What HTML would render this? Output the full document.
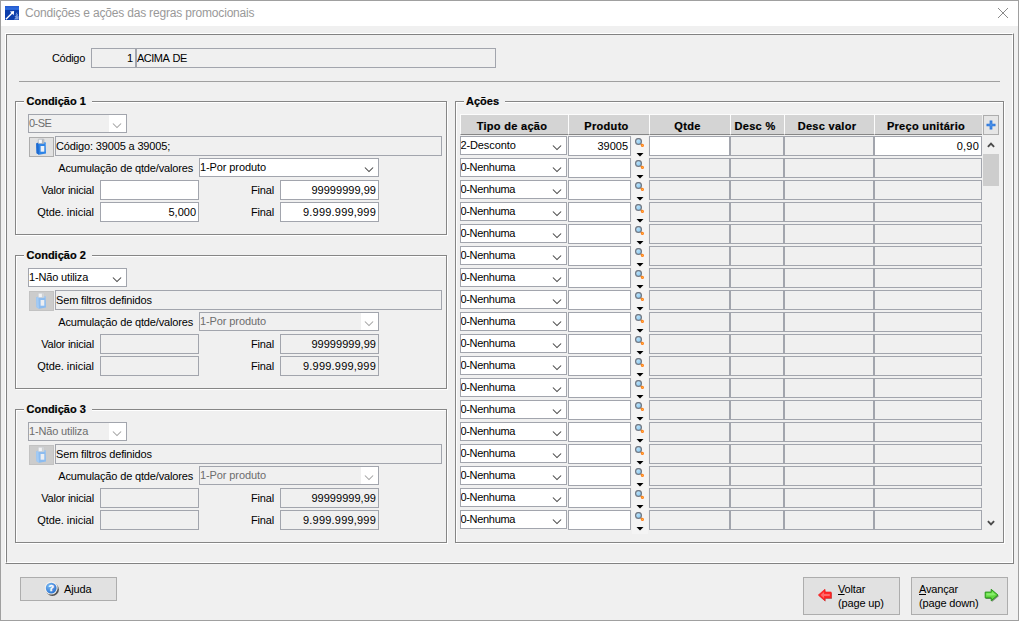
<!DOCTYPE html>
<html lang="pt-BR"><head><meta charset="utf-8"><title>Condições e ações das regras promocionais</title>
<style>
*{box-sizing:border-box;margin:0;padding:0}
html,body{width:1023px;height:623px;background:#fff;overflow:hidden}
body{font-family:"Liberation Sans",sans-serif;font-size:11px;color:#000;position:relative;line-height:13px}
.a{position:absolute}
.win{left:0;top:0;width:1019px;height:621px;background:#f0f0f0;border:1px solid #a0a0a0}
.tbar{left:1px;top:1px;width:1017px;height:25px;background:#fff}
.ttl{left:25px;top:5px;font-size:12px;line-height:16px;color:#999;letter-spacing:-0.18px;white-space:nowrap}
.panel{left:5px;top:33px;width:1009px;height:531px;border:1px solid;border-color:#fff #828282 #828282 #fff}
.panel i{position:absolute;left:0;top:0;right:0;bottom:0;border:1px solid;border-color:#828282 #fff #fff #828282}
.t{white-space:nowrap;height:13px;line-height:13px;letter-spacing:-0.16px}
.r{text-align:right}
.in{border:1px solid #a2a5ad;background:#fff;height:20px;line-height:18px;white-space:nowrap;overflow:hidden;padding:0 2px 0 0;letter-spacing:0}
.dis{background:#f0f0f0}
.cb{border:1px solid #a2a5ad;background:#fff;height:19px;line-height:17px;white-space:nowrap;overflow:hidden;padding:0;letter-spacing:-0.1px}
.cbd{background:#f0f0f0;color:#6d6d6d}
.fs{border:1px solid #868686;box-shadow:1px 1px 0 #fff, inset 1px 1px 0 #fff}
.lg{font-weight:bold;-webkit-text-stroke:0.2px #000;background:#f0f0f0;height:13px;line-height:13px;white-space:nowrap}
.btn{background:#e1e1e1;border:1px solid #adadad}
.hd{-webkit-text-stroke:0.2px #000;background:#d4d4d4;height:21px;line-height:22.6px;font-weight:bold;text-align:center;white-space:nowrap;border-bottom:1px solid #868686;border-top:1px solid #fcfcfc;border-left:1px solid #fcfcfc;letter-spacing:0.3px;padding-right:5px}
.cell{border:1px solid #a2a5ad;background:#f0f0f0;height:20px}
.w{background:#fff}
u{text-decoration:underline}
</style></head><body>
<svg width="0" height="0" style="position:absolute"><defs><linearGradient id="mg" x1="0" y1="0" x2="1" y2="1"><stop offset="0" stop-color="#d0ecfc"/><stop offset="1" stop-color="#7cc3f2"/></linearGradient></defs></svg>
<div class="a win"></div>
<div class="a tbar"></div>
<svg class="a" style="left:5px;top:6px" width="14" height="14" viewBox="0 0 14 14"><defs><linearGradient id="ig" x1="0" y1="0" x2="0" y2="1"><stop offset="0" stop-color="#2559cc"/><stop offset="1" stop-color="#3273e6"/></linearGradient></defs><rect width="14" height="14" fill="#0b3dab"/><rect width="14" height="3.8" fill="url(#ig)"/><path d="M0.9 13.3 L7.4 6.8" stroke="#fff" stroke-width="1.3"/><path d="M4.9 5.4 L9.1 5 L8.7 9.3 Z" fill="#fff"/><path d="M12.2 6 L10.4 8.6 L12 8.4 L9.4 11 L10.8 11 L9 13.5 H13.6 V10 L12.6 10.4 L13 8 L12 8.3 Z" fill="#8fabe6" opacity="0.85"/></svg>
<div class="a ttl">Condições e ações das regras promocionais</div>
<svg class="a" style="left:997px;top:7px" width="12" height="12" viewBox="0 0 12 12"><path d="M1 1 L11 11 M11 1 L1 11" stroke="#8a8a8a" stroke-width="1"/></svg>
<div class="a panel"><i></i></div>
<div class="a t r" style="left:30px;top:52px;width:55px;letter-spacing:-0.3px">Código</div>
<div class="a in dis r" style="left:91px;top:48px;width:45px;padding-right:2px">1</div>
<div class="a in dis" style="left:136px;top:48px;width:360px;letter-spacing:-0.5px;word-spacing:1.2px">ACIMA DE</div>
<div class="a" style="left:19px;top:81px;width:981px;height:1px;background:#a0a0a0"></div>
<div class="a fs" style="left:15px;top:101px;width:432px;height:134px"></div>
<div class="a lg" style="left:24px;top:95px;width:68px;padding-left:2.5px">Condição 1</div>
<div class="a cb cbd" style="left:28px;top:114px;width:99px;letter-spacing:-0.55px">0-SE</div>
<div class="a" style="left:109px;top:115px;width:17px;height:17px;background:#fff"></div>
<svg class="a" style="left:112px;top:122px" width="11" height="7" viewBox="0 0 11 7"><path d="M0.9 1.5 L5 5.6 L9.1 1.5" fill="none" stroke="#a3a3a3" stroke-width="1.05"/></svg>
<div class="a btn" style="left:29px;top:137px;width:25px;height:20px"></div>
<svg class="a" style="left:35px;top:138px" width="13" height="18" viewBox="0 0 13 18"><path d="M1.2 5.6 L3.4 4.6 H10.6 L11 15.4 L4 16.8 L1.6 15.2 Z" fill="#2e84e6"/><path d="M1.2 5.6 L3.4 4.6 L4 16.8 L1.6 15.2 Z" fill="#1f6ad0"/><path d="M3.4 4.6 H10.6 L10.7 6 H3.5 Z" fill="#4a9af2"/><rect x="3.3" y="1.2" width="5.6" height="4.4" rx="0.5" fill="#f6f7f9" stroke="#9ea4ad" stroke-width="0.6"/><rect x="6.9" y="1.5" width="1.7" height="3.8" fill="#9aa0a9" opacity="0.75"/><rect x="5.6" y="8" width="3.7" height="5.7" fill="#eef1f6"/></svg>
<div class="a in dis" style="left:55px;top:136px;width:387px;letter-spacing:-0.15px">Código: 39005 a 39005;</div>
<div class="a t r" style="left:40px;top:162px;width:153px">Acumulação de qtde/valores</div>
<div class="a cb" style="left:199px;top:158px;width:180px">1-Por produto</div>
<svg class="a" style="left:364px;top:166px" width="11" height="7" viewBox="0 0 11 7"><path d="M0.9 1.5 L5 5.6 L9.1 1.5" fill="none" stroke="#444" stroke-width="1.05"/></svg>
<div class="a t r" style="left:29px;top:184px;width:65px;letter-spacing:-0.2px">Valor inicial</div>
<div class="a in r" style="left:100px;top:180px;width:99px"></div>
<div class="a t r" style="left:240px;top:184px;width:34px">Final</div>
<div class="a in r" style="left:280px;top:180px;width:99px;letter-spacing:0.03px">99999999,99</div>
<div class="a t r" style="left:29px;top:206px;width:65px;letter-spacing:-0.05px">Qtde. inicial</div>
<div class="a in r" style="left:100px;top:202px;width:99px">5,000</div>
<div class="a t r" style="left:240px;top:206px;width:34px">Final</div>
<div class="a in r" style="left:280px;top:202px;width:99px;letter-spacing:0.2px">9.999.999,999</div>
<div class="a fs" style="left:15px;top:255px;width:432px;height:134px"></div>
<div class="a lg" style="left:24px;top:249px;width:68px;padding-left:2.5px">Condição 2</div>
<div class="a cb" style="left:28px;top:268px;width:99px;letter-spacing:-0.15px">1-Não utiliza</div>
<svg class="a" style="left:112px;top:276px" width="11" height="7" viewBox="0 0 11 7"><path d="M0.9 1.5 L5 5.6 L9.1 1.5" fill="none" stroke="#444" stroke-width="1.05"/></svg>
<div class="a" style="left:29px;top:291px;width:25px;height:20px;background:#cccccc;border:1px solid #c2c2c2"></div>
<svg class="a" style="left:35px;top:292px" width="13" height="18" viewBox="0 0 13 18"><path d="M1.2 5.6 L3.4 4.6 H10.6 L11 15.4 L4 16.8 L1.6 15.2 Z" fill="#8cbcf0"/><path d="M1.2 5.6 L3.4 4.6 L4 16.8 L1.6 15.2 Z" fill="#a3cbf5"/><path d="M3.4 4.6 H10.6 L10.7 6 H3.5 Z" fill="#9cc7f4"/><rect x="3.3" y="1.2" width="5.6" height="4.4" rx="0.5" fill="#f2f3f5" stroke="#c6c9ce" stroke-width="0.6"/><rect x="6.9" y="1.5" width="1.7" height="3.8" fill="#c2c5ca" opacity="0.75"/><rect x="5.6" y="8" width="3.7" height="5.7" fill="#eceef2"/></svg>
<div class="a in dis" style="left:55px;top:290px;width:387px;letter-spacing:-0.15px">Sem filtros definidos</div>
<div class="a t r" style="left:40px;top:316px;width:153px">Acumulação de qtde/valores</div>
<div class="a cb cbd" style="left:199px;top:312px;width:180px">1-Por produto</div>
<div class="a" style="left:361px;top:313px;width:17px;height:17px;background:#fff"></div>
<svg class="a" style="left:364px;top:320px" width="11" height="7" viewBox="0 0 11 7"><path d="M0.9 1.5 L5 5.6 L9.1 1.5" fill="none" stroke="#a3a3a3" stroke-width="1.05"/></svg>
<div class="a t r" style="left:29px;top:338px;width:65px;letter-spacing:-0.2px">Valor inicial</div>
<div class="a in dis r" style="left:100px;top:334px;width:99px"></div>
<div class="a t r" style="left:240px;top:338px;width:34px">Final</div>
<div class="a in dis r" style="left:280px;top:334px;width:99px;letter-spacing:0.03px">99999999,99</div>
<div class="a t r" style="left:29px;top:360px;width:65px;letter-spacing:-0.05px">Qtde. inicial</div>
<div class="a in dis r" style="left:100px;top:356px;width:99px"></div>
<div class="a t r" style="left:240px;top:360px;width:34px">Final</div>
<div class="a in dis r" style="left:280px;top:356px;width:99px;letter-spacing:0.2px">9.999.999,999</div>
<div class="a fs" style="left:15px;top:409px;width:432px;height:134px"></div>
<div class="a lg" style="left:24px;top:403px;width:68px;padding-left:2.5px">Condição 3</div>
<div class="a cb cbd" style="left:28px;top:422px;width:99px;letter-spacing:-0.15px">1-Não utiliza</div>
<div class="a" style="left:109px;top:423px;width:17px;height:17px;background:#fff"></div>
<svg class="a" style="left:112px;top:430px" width="11" height="7" viewBox="0 0 11 7"><path d="M0.9 1.5 L5 5.6 L9.1 1.5" fill="none" stroke="#a3a3a3" stroke-width="1.05"/></svg>
<div class="a" style="left:29px;top:445px;width:25px;height:20px;background:#cccccc;border:1px solid #c2c2c2"></div>
<svg class="a" style="left:35px;top:446px" width="13" height="18" viewBox="0 0 13 18"><path d="M1.2 5.6 L3.4 4.6 H10.6 L11 15.4 L4 16.8 L1.6 15.2 Z" fill="#8cbcf0"/><path d="M1.2 5.6 L3.4 4.6 L4 16.8 L1.6 15.2 Z" fill="#a3cbf5"/><path d="M3.4 4.6 H10.6 L10.7 6 H3.5 Z" fill="#9cc7f4"/><rect x="3.3" y="1.2" width="5.6" height="4.4" rx="0.5" fill="#f2f3f5" stroke="#c6c9ce" stroke-width="0.6"/><rect x="6.9" y="1.5" width="1.7" height="3.8" fill="#c2c5ca" opacity="0.75"/><rect x="5.6" y="8" width="3.7" height="5.7" fill="#eceef2"/></svg>
<div class="a in dis" style="left:55px;top:444px;width:387px;letter-spacing:-0.15px">Sem filtros definidos</div>
<div class="a t r" style="left:40px;top:470px;width:153px">Acumulação de qtde/valores</div>
<div class="a cb cbd" style="left:199px;top:466px;width:180px">1-Por produto</div>
<div class="a" style="left:361px;top:467px;width:17px;height:17px;background:#fff"></div>
<svg class="a" style="left:364px;top:474px" width="11" height="7" viewBox="0 0 11 7"><path d="M0.9 1.5 L5 5.6 L9.1 1.5" fill="none" stroke="#a3a3a3" stroke-width="1.05"/></svg>
<div class="a t r" style="left:29px;top:492px;width:65px;letter-spacing:-0.2px">Valor inicial</div>
<div class="a in dis r" style="left:100px;top:488px;width:99px"></div>
<div class="a t r" style="left:240px;top:492px;width:34px">Final</div>
<div class="a in dis r" style="left:280px;top:488px;width:99px;letter-spacing:0.03px">99999999,99</div>
<div class="a t r" style="left:29px;top:514px;width:65px;letter-spacing:-0.05px">Qtde. inicial</div>
<div class="a in dis r" style="left:100px;top:510px;width:99px"></div>
<div class="a t r" style="left:240px;top:514px;width:34px">Final</div>
<div class="a in dis r" style="left:280px;top:510px;width:99px;letter-spacing:0.2px">9.999.999,999</div>
<div class="a fs" style="left:455px;top:101px;width:549px;height:442px"></div>
<div class="a lg" style="left:464px;top:95px;width:41px;padding-left:2px">Ações</div>
<div class="a hd" style="left:460px;top:114px;width:108px">Tipo de ação</div>
<div class="a hd" style="left:568px;top:114px;width:81px">Produto</div>
<div class="a hd" style="left:649px;top:114px;width:81px">Qtde</div>
<div class="a hd" style="left:730px;top:114px;width:54px">Desc %</div>
<div class="a hd" style="left:784px;top:114px;width:90px">Desc valor</div>
<div class="a hd" style="left:874px;top:114px;width:108px">Preço unitário</div>
<div class="a btn" style="left:983px;top:115px;width:16px;height:20px;background:#e6e6e6"></div>
<svg class="a" style="left:986px;top:120px" width="10" height="10" viewBox="0 0 10 10"><path d="M5 0.5 V9.5 M0.5 5 H9.5" stroke="#2a74d8" stroke-width="2.7"/><path d="M5 1.5 V8.5 M1.5 5 H8.5" stroke="#5aa0f0" stroke-width="0.8"/></svg>
<div class="a" style="left:632px;top:136px;width:16px;height:398px;background:#f4f4f4"></div>
<div class="a cb" style="left:460px;top:136px;width:107px;text-indent:-0.6px;letter-spacing:-0.1px">2-Desconto</div>
<svg class="a" style="left:552px;top:144px" width="11" height="7" viewBox="0 0 11 7"><path d="M0.9 1.5 L5 5.6 L9.1 1.5" fill="none" stroke="#444" stroke-width="1.05"/></svg>
<div class="a cell w r" style="left:568px;top:136px;width:63px;line-height:18px;padding-right:2px">39005</div>
<svg class="a" style="left:634px;top:138px" width="11" height="10" viewBox="0 0 11 10"><circle cx="4.5" cy="3.5" r="2.9" fill="url(#mg)" stroke="#737a85" stroke-width="1.25"/><path d="M6.7 5.7 L8 7" stroke="#b98c5a" stroke-width="1.3"/><circle cx="8.4" cy="7.4" r="1.55" fill="#ff7d1c"/><circle cx="8.4" cy="7.4" r="0.6" fill="#ffc23a"/></svg>
<svg class="a" style="left:636px;top:153px" width="8" height="4" viewBox="0 0 8 4"><path d="M0.5 0 H7.5 L4 3.5 Z" fill="#000"/></svg>
<div class="a cell w" style="left:649px;top:136px;width:81px"></div>
<div class="a cell" style="left:730px;top:136px;width:54px"></div>
<div class="a cell" style="left:784px;top:136px;width:90px"></div>
<div class="a cell w r" style="left:874px;top:136px;width:108px;line-height:18px;padding-right:2px;letter-spacing:0.2px">0,90</div>
<div class="a cb" style="left:460px;top:158px;width:107px;text-indent:-0.6px;letter-spacing:-0.3px">0-Nenhuma</div>
<svg class="a" style="left:552px;top:166px" width="11" height="7" viewBox="0 0 11 7"><path d="M0.9 1.5 L5 5.6 L9.1 1.5" fill="none" stroke="#444" stroke-width="1.05"/></svg>
<div class="a cell w r" style="left:568px;top:158px;width:63px;line-height:18px;padding-right:2px"></div>
<svg class="a" style="left:634px;top:160px" width="11" height="10" viewBox="0 0 11 10"><circle cx="4.5" cy="3.5" r="2.9" fill="url(#mg)" stroke="#737a85" stroke-width="1.25"/><path d="M6.7 5.7 L8 7" stroke="#b98c5a" stroke-width="1.3"/><circle cx="8.4" cy="7.4" r="1.55" fill="#ff7d1c"/><circle cx="8.4" cy="7.4" r="0.6" fill="#ffc23a"/></svg>
<svg class="a" style="left:636px;top:175px" width="8" height="4" viewBox="0 0 8 4"><path d="M0.5 0 H7.5 L4 3.5 Z" fill="#000"/></svg>
<div class="a cell" style="left:649px;top:158px;width:81px"></div>
<div class="a cell" style="left:730px;top:158px;width:54px"></div>
<div class="a cell" style="left:784px;top:158px;width:90px"></div>
<div class="a cell r" style="left:874px;top:158px;width:108px;line-height:18px;padding-right:2px;letter-spacing:0.2px"></div>
<div class="a cb" style="left:460px;top:180px;width:107px;text-indent:-0.6px;letter-spacing:-0.3px">0-Nenhuma</div>
<svg class="a" style="left:552px;top:188px" width="11" height="7" viewBox="0 0 11 7"><path d="M0.9 1.5 L5 5.6 L9.1 1.5" fill="none" stroke="#444" stroke-width="1.05"/></svg>
<div class="a cell w r" style="left:568px;top:180px;width:63px;line-height:18px;padding-right:2px"></div>
<svg class="a" style="left:634px;top:182px" width="11" height="10" viewBox="0 0 11 10"><circle cx="4.5" cy="3.5" r="2.9" fill="url(#mg)" stroke="#737a85" stroke-width="1.25"/><path d="M6.7 5.7 L8 7" stroke="#b98c5a" stroke-width="1.3"/><circle cx="8.4" cy="7.4" r="1.55" fill="#ff7d1c"/><circle cx="8.4" cy="7.4" r="0.6" fill="#ffc23a"/></svg>
<svg class="a" style="left:636px;top:197px" width="8" height="4" viewBox="0 0 8 4"><path d="M0.5 0 H7.5 L4 3.5 Z" fill="#000"/></svg>
<div class="a cell" style="left:649px;top:180px;width:81px"></div>
<div class="a cell" style="left:730px;top:180px;width:54px"></div>
<div class="a cell" style="left:784px;top:180px;width:90px"></div>
<div class="a cell r" style="left:874px;top:180px;width:108px;line-height:18px;padding-right:2px;letter-spacing:0.2px"></div>
<div class="a cb" style="left:460px;top:202px;width:107px;text-indent:-0.6px;letter-spacing:-0.3px">0-Nenhuma</div>
<svg class="a" style="left:552px;top:210px" width="11" height="7" viewBox="0 0 11 7"><path d="M0.9 1.5 L5 5.6 L9.1 1.5" fill="none" stroke="#444" stroke-width="1.05"/></svg>
<div class="a cell w r" style="left:568px;top:202px;width:63px;line-height:18px;padding-right:2px"></div>
<svg class="a" style="left:634px;top:204px" width="11" height="10" viewBox="0 0 11 10"><circle cx="4.5" cy="3.5" r="2.9" fill="url(#mg)" stroke="#737a85" stroke-width="1.25"/><path d="M6.7 5.7 L8 7" stroke="#b98c5a" stroke-width="1.3"/><circle cx="8.4" cy="7.4" r="1.55" fill="#ff7d1c"/><circle cx="8.4" cy="7.4" r="0.6" fill="#ffc23a"/></svg>
<svg class="a" style="left:636px;top:219px" width="8" height="4" viewBox="0 0 8 4"><path d="M0.5 0 H7.5 L4 3.5 Z" fill="#000"/></svg>
<div class="a cell" style="left:649px;top:202px;width:81px"></div>
<div class="a cell" style="left:730px;top:202px;width:54px"></div>
<div class="a cell" style="left:784px;top:202px;width:90px"></div>
<div class="a cell r" style="left:874px;top:202px;width:108px;line-height:18px;padding-right:2px;letter-spacing:0.2px"></div>
<div class="a cb" style="left:460px;top:224px;width:107px;text-indent:-0.6px;letter-spacing:-0.3px">0-Nenhuma</div>
<svg class="a" style="left:552px;top:232px" width="11" height="7" viewBox="0 0 11 7"><path d="M0.9 1.5 L5 5.6 L9.1 1.5" fill="none" stroke="#444" stroke-width="1.05"/></svg>
<div class="a cell w r" style="left:568px;top:224px;width:63px;line-height:18px;padding-right:2px"></div>
<svg class="a" style="left:634px;top:226px" width="11" height="10" viewBox="0 0 11 10"><circle cx="4.5" cy="3.5" r="2.9" fill="url(#mg)" stroke="#737a85" stroke-width="1.25"/><path d="M6.7 5.7 L8 7" stroke="#b98c5a" stroke-width="1.3"/><circle cx="8.4" cy="7.4" r="1.55" fill="#ff7d1c"/><circle cx="8.4" cy="7.4" r="0.6" fill="#ffc23a"/></svg>
<svg class="a" style="left:636px;top:241px" width="8" height="4" viewBox="0 0 8 4"><path d="M0.5 0 H7.5 L4 3.5 Z" fill="#000"/></svg>
<div class="a cell" style="left:649px;top:224px;width:81px"></div>
<div class="a cell" style="left:730px;top:224px;width:54px"></div>
<div class="a cell" style="left:784px;top:224px;width:90px"></div>
<div class="a cell r" style="left:874px;top:224px;width:108px;line-height:18px;padding-right:2px;letter-spacing:0.2px"></div>
<div class="a cb" style="left:460px;top:246px;width:107px;text-indent:-0.6px;letter-spacing:-0.3px">0-Nenhuma</div>
<svg class="a" style="left:552px;top:254px" width="11" height="7" viewBox="0 0 11 7"><path d="M0.9 1.5 L5 5.6 L9.1 1.5" fill="none" stroke="#444" stroke-width="1.05"/></svg>
<div class="a cell w r" style="left:568px;top:246px;width:63px;line-height:18px;padding-right:2px"></div>
<svg class="a" style="left:634px;top:248px" width="11" height="10" viewBox="0 0 11 10"><circle cx="4.5" cy="3.5" r="2.9" fill="url(#mg)" stroke="#737a85" stroke-width="1.25"/><path d="M6.7 5.7 L8 7" stroke="#b98c5a" stroke-width="1.3"/><circle cx="8.4" cy="7.4" r="1.55" fill="#ff7d1c"/><circle cx="8.4" cy="7.4" r="0.6" fill="#ffc23a"/></svg>
<svg class="a" style="left:636px;top:263px" width="8" height="4" viewBox="0 0 8 4"><path d="M0.5 0 H7.5 L4 3.5 Z" fill="#000"/></svg>
<div class="a cell" style="left:649px;top:246px;width:81px"></div>
<div class="a cell" style="left:730px;top:246px;width:54px"></div>
<div class="a cell" style="left:784px;top:246px;width:90px"></div>
<div class="a cell r" style="left:874px;top:246px;width:108px;line-height:18px;padding-right:2px;letter-spacing:0.2px"></div>
<div class="a cb" style="left:460px;top:268px;width:107px;text-indent:-0.6px;letter-spacing:-0.3px">0-Nenhuma</div>
<svg class="a" style="left:552px;top:276px" width="11" height="7" viewBox="0 0 11 7"><path d="M0.9 1.5 L5 5.6 L9.1 1.5" fill="none" stroke="#444" stroke-width="1.05"/></svg>
<div class="a cell w r" style="left:568px;top:268px;width:63px;line-height:18px;padding-right:2px"></div>
<svg class="a" style="left:634px;top:270px" width="11" height="10" viewBox="0 0 11 10"><circle cx="4.5" cy="3.5" r="2.9" fill="url(#mg)" stroke="#737a85" stroke-width="1.25"/><path d="M6.7 5.7 L8 7" stroke="#b98c5a" stroke-width="1.3"/><circle cx="8.4" cy="7.4" r="1.55" fill="#ff7d1c"/><circle cx="8.4" cy="7.4" r="0.6" fill="#ffc23a"/></svg>
<svg class="a" style="left:636px;top:285px" width="8" height="4" viewBox="0 0 8 4"><path d="M0.5 0 H7.5 L4 3.5 Z" fill="#000"/></svg>
<div class="a cell" style="left:649px;top:268px;width:81px"></div>
<div class="a cell" style="left:730px;top:268px;width:54px"></div>
<div class="a cell" style="left:784px;top:268px;width:90px"></div>
<div class="a cell r" style="left:874px;top:268px;width:108px;line-height:18px;padding-right:2px;letter-spacing:0.2px"></div>
<div class="a cb" style="left:460px;top:290px;width:107px;text-indent:-0.6px;letter-spacing:-0.3px">0-Nenhuma</div>
<svg class="a" style="left:552px;top:298px" width="11" height="7" viewBox="0 0 11 7"><path d="M0.9 1.5 L5 5.6 L9.1 1.5" fill="none" stroke="#444" stroke-width="1.05"/></svg>
<div class="a cell w r" style="left:568px;top:290px;width:63px;line-height:18px;padding-right:2px"></div>
<svg class="a" style="left:634px;top:292px" width="11" height="10" viewBox="0 0 11 10"><circle cx="4.5" cy="3.5" r="2.9" fill="url(#mg)" stroke="#737a85" stroke-width="1.25"/><path d="M6.7 5.7 L8 7" stroke="#b98c5a" stroke-width="1.3"/><circle cx="8.4" cy="7.4" r="1.55" fill="#ff7d1c"/><circle cx="8.4" cy="7.4" r="0.6" fill="#ffc23a"/></svg>
<svg class="a" style="left:636px;top:307px" width="8" height="4" viewBox="0 0 8 4"><path d="M0.5 0 H7.5 L4 3.5 Z" fill="#000"/></svg>
<div class="a cell" style="left:649px;top:290px;width:81px"></div>
<div class="a cell" style="left:730px;top:290px;width:54px"></div>
<div class="a cell" style="left:784px;top:290px;width:90px"></div>
<div class="a cell r" style="left:874px;top:290px;width:108px;line-height:18px;padding-right:2px;letter-spacing:0.2px"></div>
<div class="a cb" style="left:460px;top:312px;width:107px;text-indent:-0.6px;letter-spacing:-0.3px">0-Nenhuma</div>
<svg class="a" style="left:552px;top:320px" width="11" height="7" viewBox="0 0 11 7"><path d="M0.9 1.5 L5 5.6 L9.1 1.5" fill="none" stroke="#444" stroke-width="1.05"/></svg>
<div class="a cell w r" style="left:568px;top:312px;width:63px;line-height:18px;padding-right:2px"></div>
<svg class="a" style="left:634px;top:314px" width="11" height="10" viewBox="0 0 11 10"><circle cx="4.5" cy="3.5" r="2.9" fill="url(#mg)" stroke="#737a85" stroke-width="1.25"/><path d="M6.7 5.7 L8 7" stroke="#b98c5a" stroke-width="1.3"/><circle cx="8.4" cy="7.4" r="1.55" fill="#ff7d1c"/><circle cx="8.4" cy="7.4" r="0.6" fill="#ffc23a"/></svg>
<svg class="a" style="left:636px;top:329px" width="8" height="4" viewBox="0 0 8 4"><path d="M0.5 0 H7.5 L4 3.5 Z" fill="#000"/></svg>
<div class="a cell" style="left:649px;top:312px;width:81px"></div>
<div class="a cell" style="left:730px;top:312px;width:54px"></div>
<div class="a cell" style="left:784px;top:312px;width:90px"></div>
<div class="a cell r" style="left:874px;top:312px;width:108px;line-height:18px;padding-right:2px;letter-spacing:0.2px"></div>
<div class="a cb" style="left:460px;top:334px;width:107px;text-indent:-0.6px;letter-spacing:-0.3px">0-Nenhuma</div>
<svg class="a" style="left:552px;top:342px" width="11" height="7" viewBox="0 0 11 7"><path d="M0.9 1.5 L5 5.6 L9.1 1.5" fill="none" stroke="#444" stroke-width="1.05"/></svg>
<div class="a cell w r" style="left:568px;top:334px;width:63px;line-height:18px;padding-right:2px"></div>
<svg class="a" style="left:634px;top:336px" width="11" height="10" viewBox="0 0 11 10"><circle cx="4.5" cy="3.5" r="2.9" fill="url(#mg)" stroke="#737a85" stroke-width="1.25"/><path d="M6.7 5.7 L8 7" stroke="#b98c5a" stroke-width="1.3"/><circle cx="8.4" cy="7.4" r="1.55" fill="#ff7d1c"/><circle cx="8.4" cy="7.4" r="0.6" fill="#ffc23a"/></svg>
<svg class="a" style="left:636px;top:351px" width="8" height="4" viewBox="0 0 8 4"><path d="M0.5 0 H7.5 L4 3.5 Z" fill="#000"/></svg>
<div class="a cell" style="left:649px;top:334px;width:81px"></div>
<div class="a cell" style="left:730px;top:334px;width:54px"></div>
<div class="a cell" style="left:784px;top:334px;width:90px"></div>
<div class="a cell r" style="left:874px;top:334px;width:108px;line-height:18px;padding-right:2px;letter-spacing:0.2px"></div>
<div class="a cb" style="left:460px;top:356px;width:107px;text-indent:-0.6px;letter-spacing:-0.3px">0-Nenhuma</div>
<svg class="a" style="left:552px;top:364px" width="11" height="7" viewBox="0 0 11 7"><path d="M0.9 1.5 L5 5.6 L9.1 1.5" fill="none" stroke="#444" stroke-width="1.05"/></svg>
<div class="a cell w r" style="left:568px;top:356px;width:63px;line-height:18px;padding-right:2px"></div>
<svg class="a" style="left:634px;top:358px" width="11" height="10" viewBox="0 0 11 10"><circle cx="4.5" cy="3.5" r="2.9" fill="url(#mg)" stroke="#737a85" stroke-width="1.25"/><path d="M6.7 5.7 L8 7" stroke="#b98c5a" stroke-width="1.3"/><circle cx="8.4" cy="7.4" r="1.55" fill="#ff7d1c"/><circle cx="8.4" cy="7.4" r="0.6" fill="#ffc23a"/></svg>
<svg class="a" style="left:636px;top:373px" width="8" height="4" viewBox="0 0 8 4"><path d="M0.5 0 H7.5 L4 3.5 Z" fill="#000"/></svg>
<div class="a cell" style="left:649px;top:356px;width:81px"></div>
<div class="a cell" style="left:730px;top:356px;width:54px"></div>
<div class="a cell" style="left:784px;top:356px;width:90px"></div>
<div class="a cell r" style="left:874px;top:356px;width:108px;line-height:18px;padding-right:2px;letter-spacing:0.2px"></div>
<div class="a cb" style="left:460px;top:378px;width:107px;text-indent:-0.6px;letter-spacing:-0.3px">0-Nenhuma</div>
<svg class="a" style="left:552px;top:386px" width="11" height="7" viewBox="0 0 11 7"><path d="M0.9 1.5 L5 5.6 L9.1 1.5" fill="none" stroke="#444" stroke-width="1.05"/></svg>
<div class="a cell w r" style="left:568px;top:378px;width:63px;line-height:18px;padding-right:2px"></div>
<svg class="a" style="left:634px;top:380px" width="11" height="10" viewBox="0 0 11 10"><circle cx="4.5" cy="3.5" r="2.9" fill="url(#mg)" stroke="#737a85" stroke-width="1.25"/><path d="M6.7 5.7 L8 7" stroke="#b98c5a" stroke-width="1.3"/><circle cx="8.4" cy="7.4" r="1.55" fill="#ff7d1c"/><circle cx="8.4" cy="7.4" r="0.6" fill="#ffc23a"/></svg>
<svg class="a" style="left:636px;top:395px" width="8" height="4" viewBox="0 0 8 4"><path d="M0.5 0 H7.5 L4 3.5 Z" fill="#000"/></svg>
<div class="a cell" style="left:649px;top:378px;width:81px"></div>
<div class="a cell" style="left:730px;top:378px;width:54px"></div>
<div class="a cell" style="left:784px;top:378px;width:90px"></div>
<div class="a cell r" style="left:874px;top:378px;width:108px;line-height:18px;padding-right:2px;letter-spacing:0.2px"></div>
<div class="a cb" style="left:460px;top:400px;width:107px;text-indent:-0.6px;letter-spacing:-0.3px">0-Nenhuma</div>
<svg class="a" style="left:552px;top:408px" width="11" height="7" viewBox="0 0 11 7"><path d="M0.9 1.5 L5 5.6 L9.1 1.5" fill="none" stroke="#444" stroke-width="1.05"/></svg>
<div class="a cell w r" style="left:568px;top:400px;width:63px;line-height:18px;padding-right:2px"></div>
<svg class="a" style="left:634px;top:402px" width="11" height="10" viewBox="0 0 11 10"><circle cx="4.5" cy="3.5" r="2.9" fill="url(#mg)" stroke="#737a85" stroke-width="1.25"/><path d="M6.7 5.7 L8 7" stroke="#b98c5a" stroke-width="1.3"/><circle cx="8.4" cy="7.4" r="1.55" fill="#ff7d1c"/><circle cx="8.4" cy="7.4" r="0.6" fill="#ffc23a"/></svg>
<svg class="a" style="left:636px;top:417px" width="8" height="4" viewBox="0 0 8 4"><path d="M0.5 0 H7.5 L4 3.5 Z" fill="#000"/></svg>
<div class="a cell" style="left:649px;top:400px;width:81px"></div>
<div class="a cell" style="left:730px;top:400px;width:54px"></div>
<div class="a cell" style="left:784px;top:400px;width:90px"></div>
<div class="a cell r" style="left:874px;top:400px;width:108px;line-height:18px;padding-right:2px;letter-spacing:0.2px"></div>
<div class="a cb" style="left:460px;top:422px;width:107px;text-indent:-0.6px;letter-spacing:-0.3px">0-Nenhuma</div>
<svg class="a" style="left:552px;top:430px" width="11" height="7" viewBox="0 0 11 7"><path d="M0.9 1.5 L5 5.6 L9.1 1.5" fill="none" stroke="#444" stroke-width="1.05"/></svg>
<div class="a cell w r" style="left:568px;top:422px;width:63px;line-height:18px;padding-right:2px"></div>
<svg class="a" style="left:634px;top:424px" width="11" height="10" viewBox="0 0 11 10"><circle cx="4.5" cy="3.5" r="2.9" fill="url(#mg)" stroke="#737a85" stroke-width="1.25"/><path d="M6.7 5.7 L8 7" stroke="#b98c5a" stroke-width="1.3"/><circle cx="8.4" cy="7.4" r="1.55" fill="#ff7d1c"/><circle cx="8.4" cy="7.4" r="0.6" fill="#ffc23a"/></svg>
<svg class="a" style="left:636px;top:439px" width="8" height="4" viewBox="0 0 8 4"><path d="M0.5 0 H7.5 L4 3.5 Z" fill="#000"/></svg>
<div class="a cell" style="left:649px;top:422px;width:81px"></div>
<div class="a cell" style="left:730px;top:422px;width:54px"></div>
<div class="a cell" style="left:784px;top:422px;width:90px"></div>
<div class="a cell r" style="left:874px;top:422px;width:108px;line-height:18px;padding-right:2px;letter-spacing:0.2px"></div>
<div class="a cb" style="left:460px;top:444px;width:107px;text-indent:-0.6px;letter-spacing:-0.3px">0-Nenhuma</div>
<svg class="a" style="left:552px;top:452px" width="11" height="7" viewBox="0 0 11 7"><path d="M0.9 1.5 L5 5.6 L9.1 1.5" fill="none" stroke="#444" stroke-width="1.05"/></svg>
<div class="a cell w r" style="left:568px;top:444px;width:63px;line-height:18px;padding-right:2px"></div>
<svg class="a" style="left:634px;top:446px" width="11" height="10" viewBox="0 0 11 10"><circle cx="4.5" cy="3.5" r="2.9" fill="url(#mg)" stroke="#737a85" stroke-width="1.25"/><path d="M6.7 5.7 L8 7" stroke="#b98c5a" stroke-width="1.3"/><circle cx="8.4" cy="7.4" r="1.55" fill="#ff7d1c"/><circle cx="8.4" cy="7.4" r="0.6" fill="#ffc23a"/></svg>
<svg class="a" style="left:636px;top:461px" width="8" height="4" viewBox="0 0 8 4"><path d="M0.5 0 H7.5 L4 3.5 Z" fill="#000"/></svg>
<div class="a cell" style="left:649px;top:444px;width:81px"></div>
<div class="a cell" style="left:730px;top:444px;width:54px"></div>
<div class="a cell" style="left:784px;top:444px;width:90px"></div>
<div class="a cell r" style="left:874px;top:444px;width:108px;line-height:18px;padding-right:2px;letter-spacing:0.2px"></div>
<div class="a cb" style="left:460px;top:466px;width:107px;text-indent:-0.6px;letter-spacing:-0.3px">0-Nenhuma</div>
<svg class="a" style="left:552px;top:474px" width="11" height="7" viewBox="0 0 11 7"><path d="M0.9 1.5 L5 5.6 L9.1 1.5" fill="none" stroke="#444" stroke-width="1.05"/></svg>
<div class="a cell w r" style="left:568px;top:466px;width:63px;line-height:18px;padding-right:2px"></div>
<svg class="a" style="left:634px;top:468px" width="11" height="10" viewBox="0 0 11 10"><circle cx="4.5" cy="3.5" r="2.9" fill="url(#mg)" stroke="#737a85" stroke-width="1.25"/><path d="M6.7 5.7 L8 7" stroke="#b98c5a" stroke-width="1.3"/><circle cx="8.4" cy="7.4" r="1.55" fill="#ff7d1c"/><circle cx="8.4" cy="7.4" r="0.6" fill="#ffc23a"/></svg>
<svg class="a" style="left:636px;top:483px" width="8" height="4" viewBox="0 0 8 4"><path d="M0.5 0 H7.5 L4 3.5 Z" fill="#000"/></svg>
<div class="a cell" style="left:649px;top:466px;width:81px"></div>
<div class="a cell" style="left:730px;top:466px;width:54px"></div>
<div class="a cell" style="left:784px;top:466px;width:90px"></div>
<div class="a cell r" style="left:874px;top:466px;width:108px;line-height:18px;padding-right:2px;letter-spacing:0.2px"></div>
<div class="a cb" style="left:460px;top:488px;width:107px;text-indent:-0.6px;letter-spacing:-0.3px">0-Nenhuma</div>
<svg class="a" style="left:552px;top:496px" width="11" height="7" viewBox="0 0 11 7"><path d="M0.9 1.5 L5 5.6 L9.1 1.5" fill="none" stroke="#444" stroke-width="1.05"/></svg>
<div class="a cell w r" style="left:568px;top:488px;width:63px;line-height:18px;padding-right:2px"></div>
<svg class="a" style="left:634px;top:490px" width="11" height="10" viewBox="0 0 11 10"><circle cx="4.5" cy="3.5" r="2.9" fill="url(#mg)" stroke="#737a85" stroke-width="1.25"/><path d="M6.7 5.7 L8 7" stroke="#b98c5a" stroke-width="1.3"/><circle cx="8.4" cy="7.4" r="1.55" fill="#ff7d1c"/><circle cx="8.4" cy="7.4" r="0.6" fill="#ffc23a"/></svg>
<svg class="a" style="left:636px;top:505px" width="8" height="4" viewBox="0 0 8 4"><path d="M0.5 0 H7.5 L4 3.5 Z" fill="#000"/></svg>
<div class="a cell" style="left:649px;top:488px;width:81px"></div>
<div class="a cell" style="left:730px;top:488px;width:54px"></div>
<div class="a cell" style="left:784px;top:488px;width:90px"></div>
<div class="a cell r" style="left:874px;top:488px;width:108px;line-height:18px;padding-right:2px;letter-spacing:0.2px"></div>
<div class="a cb" style="left:460px;top:510px;width:107px;text-indent:-0.6px;letter-spacing:-0.3px">0-Nenhuma</div>
<svg class="a" style="left:552px;top:518px" width="11" height="7" viewBox="0 0 11 7"><path d="M0.9 1.5 L5 5.6 L9.1 1.5" fill="none" stroke="#444" stroke-width="1.05"/></svg>
<div class="a cell w r" style="left:568px;top:510px;width:63px;line-height:18px;padding-right:2px"></div>
<svg class="a" style="left:634px;top:512px" width="11" height="10" viewBox="0 0 11 10"><circle cx="4.5" cy="3.5" r="2.9" fill="url(#mg)" stroke="#737a85" stroke-width="1.25"/><path d="M6.7 5.7 L8 7" stroke="#b98c5a" stroke-width="1.3"/><circle cx="8.4" cy="7.4" r="1.55" fill="#ff7d1c"/><circle cx="8.4" cy="7.4" r="0.6" fill="#ffc23a"/></svg>
<svg class="a" style="left:636px;top:527px" width="8" height="4" viewBox="0 0 8 4"><path d="M0.5 0 H7.5 L4 3.5 Z" fill="#000"/></svg>
<div class="a cell" style="left:649px;top:510px;width:81px"></div>
<div class="a cell" style="left:730px;top:510px;width:54px"></div>
<div class="a cell" style="left:784px;top:510px;width:90px"></div>
<div class="a cell r" style="left:874px;top:510px;width:108px;line-height:18px;padding-right:2px;letter-spacing:0.2px"></div>
<svg class="a" style="left:987px;top:141px" width="8" height="8" viewBox="0 0 8 8"><path d="M0.9 5.8 L4 2.7 L7.1 5.8" fill="none" stroke="#4a4a4a" stroke-width="1.9"/></svg>
<div class="a" style="left:983px;top:154px;width:16px;height:32px;background:#cdcdcd"></div>
<svg class="a" style="left:987px;top:519px" width="8" height="8" viewBox="0 0 8 8"><path d="M0.9 2.2 L4 5.3 L7.1 2.2" fill="none" stroke="#4a4a4a" stroke-width="1.9"/></svg>
<div class="a btn" style="left:20px;top:577px;width:97px;height:24px"></div>
<svg class="a" style="left:43px;top:580px" width="18" height="18" viewBox="0 0 18 18"><defs><radialGradient id="hg" cx="0.35" cy="0.3" r="0.85"><stop offset="0" stop-color="#7db8f2"/><stop offset="1" stop-color="#1d6acb"/></radialGradient><filter id="hb" x="-30%" y="-30%" width="160%" height="160%"><feGaussianBlur stdDeviation="0.7"/></filter></defs><circle cx="9.4" cy="9.5" r="6.5" fill="#222" opacity="0.75" filter="url(#hb)"/><circle cx="8.2" cy="8.1" r="6.5" fill="#f3f1ee"/><circle cx="8.2" cy="8.1" r="5.4" fill="url(#hg)"/><text x="8.2" y="11.3" font-family="Liberation Sans, sans-serif" font-size="9" font-weight="bold" fill="#fff" stroke="#fff" stroke-width="0.35" text-anchor="middle">?</text></svg>
<div class="a t" style="left:64px;top:583px">A<u>j</u>uda</div>
<div class="a btn" style="left:803px;top:577px;width:97px;height:38px"></div>
<svg class="a" style="left:816px;top:586px" width="18" height="18" viewBox="816 586 18 18"><path d="M819 596 L825.6 590.2 V593 H832 V599 H825.6 V601.8 Z" fill="#7a1010" opacity="0.45"/><path d="M818.3 595 L825 589.2 V592 H831.2 V598 H825 V600.8 Z" fill="#ff2a2a" stroke="#f01010" stroke-width="0.6" stroke-linejoin="round"/><path d="M820.6 595 L824 592 V594 H829.8 V596 H824 V598 Z" fill="#ff6a6a"/></svg>
<div class="a t" style="left:838px;top:583px"><u>V</u>oltar</div>
<div class="a t" style="left:838px;top:597px">(page up)</div>
<div class="a btn" style="left:911px;top:577px;width:97px;height:38px"></div>
<div class="a t" style="left:919px;top:583px"><u>A</u>vançar</div>
<div class="a t" style="left:919px;top:597px">(page down)</div>
<svg class="a" style="left:982px;top:586px" width="19" height="18" viewBox="982 586 19 18"><path d="M985.7 593 H991.8 V590 L999 596 L991.8 602 V599 H985.7 Z" fill="#103a08" opacity="0.5"/><path d="M985.2 592.1 H991.2 V589.3 L997.9 595 L991.2 600.7 V597.9 H985.2 Z" fill="#62d840" stroke="#27951a" stroke-width="1" stroke-linejoin="round"/><path d="M986.4 593.3 H992.2 V591.8 L995.8 595 L992.2 595.6 H986.4 Z" fill="#8cf070" opacity="0.9"/></svg>
</body></html>
